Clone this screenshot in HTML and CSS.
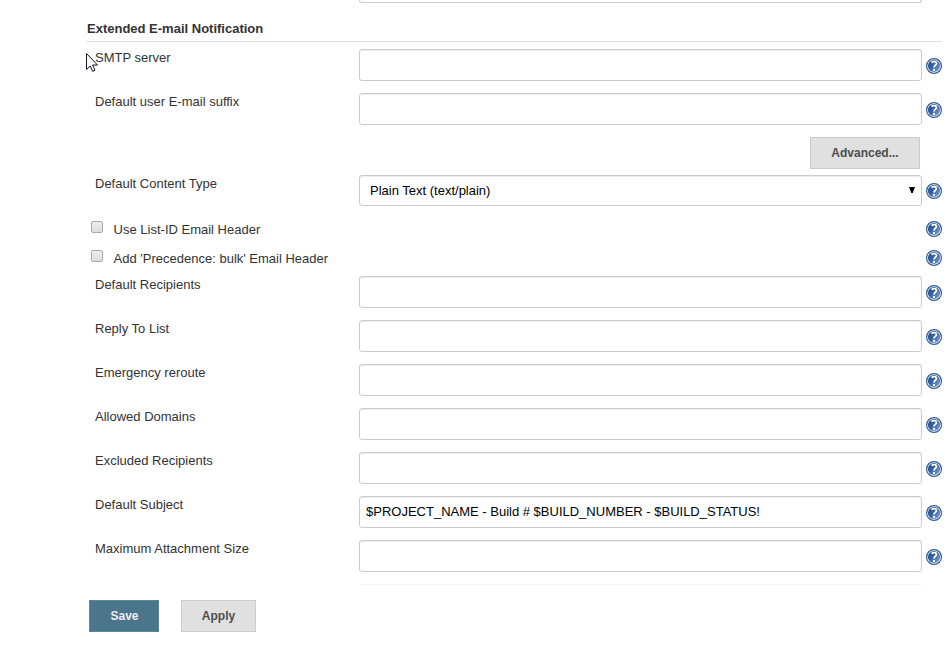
FILE: index.html
```html
<!DOCTYPE html>
<html lang="en">
<head>
<meta charset="utf-8">
<title>Configure System</title>
<link rel="stylesheet" href="styles.css">
</head>
<body>
<svg class="defs" aria-hidden="true">
  <defs>
    <linearGradient id="ball" x1="0" y1="0" x2="1" y2="1">
      <stop offset="0" stop-color="#204a87"/>
      <stop offset=".45" stop-color="#35619f"/>
      <stop offset="1" stop-color="#88abd8"/>
    </linearGradient>
    <symbol id="help" viewBox="0 0 16 16">
      <circle cx="8" cy="8" r="7.4" fill="#fff" stroke="#315c98" stroke-width="1.2"/>
      <circle cx="8" cy="8" r="6.1" fill="url(#ball)"/>
      <path d="M5.5 4.6C6.3 3.9 7.2 3.6 8.2 3.6C9.7 3.6 10.5 4.4 10.5 5.6C10.5 7.4 8 7.3 8 9.6" fill="none" stroke="#fff" stroke-width="1.8"/>
      <rect x="7" y="10.9" width="2" height="2" fill="#fff"/>
    </symbol>
  </defs>
</svg>
<main class="config">
  <div class="previous"></div>
  <h2 class="section-title">Extended E-mail Notification</h2>
  <form class="form">
    <div class="row"><label class="label">SMTP server</label><input class="field" type="text"><svg class="help"><use href="#help"/></svg></div>
    <div class="row"><label class="label">Default user E-mail suffix</label><input class="field" type="text"><svg class="help"><use href="#help"/></svg></div>
    <div class="advanced"><button class="button" type="button">Advanced...</button></div>
    <div class="row row-select"><label class="label">Default Content Type</label><div class="field select"><span>Plain Text (text/plain)</span><svg class="arrow" viewBox="0 0 6 6"><path d="M0 0H6L3.7 6H2.3Z"/></svg></div><svg class="help"><use href="#help"/></svg></div>
    <div class="check"><span class="box"></span><label class="check-label">Use List-ID Email Header</label><svg class="help"><use href="#help"/></svg></div>
    <div class="check"><span class="box"></span><label class="check-label">Add 'Precedence: bulk' Email Header</label><svg class="help"><use href="#help"/></svg></div>
    <div class="row"><label class="label">Default Recipients</label><input class="field" type="text"><svg class="help"><use href="#help"/></svg></div>
    <div class="row"><label class="label">Reply To List</label><input class="field" type="text"><svg class="help"><use href="#help"/></svg></div>
    <div class="row"><label class="label">Emergency reroute</label><input class="field" type="text"><svg class="help"><use href="#help"/></svg></div>
    <div class="row"><label class="label">Allowed Domains</label><input class="field" type="text"><svg class="help"><use href="#help"/></svg></div>
    <div class="row"><label class="label">Excluded Recipients</label><input class="field" type="text"><svg class="help"><use href="#help"/></svg></div>
    <div class="row"><label class="label">Default Subject</label><input class="field" type="text" value="$PROJECT_NAME - Build # $BUILD_NUMBER - $BUILD_STATUS!"><svg class="help"><use href="#help"/></svg></div>
    <div class="row"><label class="label">Maximum Attachment Size</label><input class="field" type="text"><svg class="help"><use href="#help"/></svg></div>
    <div class="next"></div>
    <div class="actions"><button class="button primary" type="button">Save</button><button class="button apply" type="button">Apply</button></div>
  </form>
</main>
<svg class="cursor" viewBox="0 0 12 19"><path d="M.5 .5V16.5L4.2 13L6.7 18.4L9 17.3L6.6 12H11.5Z" fill="#fff" stroke="#112" stroke-width="1"/></svg>
</body>
</html>
```
FILE: styles.css
```css
* { box-sizing: border-box; }

body {
  margin: 0;
  height: 645px;
  overflow: hidden;
  background: #fff;
  color: #333;
  font: 13px/17px "Liberation Sans", Arial, sans-serif;
}

.defs { position: absolute; width: 0; height: 0; }

.config { width: 855px; margin-left: 87px; }

.previous {
  width: 563px;
  height: 3px;
  margin-left: 272px;
  border: 1px solid #ccc;
  border-top: 0;
  border-radius: 0 0 3px 3px;
}

.section-title {
  height: 39px;
  margin: 0 0 7px;
  padding-top: 17px;
  border-bottom: 1px solid #ddd;
  font-size: 13px;
  line-height: 17px;
}

.row {
  display: grid;
  grid-template-columns: 272px 563px 16px;
  column-gap: 0;
  height: 44px;
  align-items: start;
}

.label { padding-left: 8px; }

.field {
  width: 563px;
  height: 32px;
  margin: 0;
  padding: 0 6px 2px;
  border: 1px solid #ccc;
  border-radius: 3px;
  background: #fff;
  box-shadow: inset 0 1px 1px rgba(0, 0, 0, .075);
  color: #000;
  font: 13px "Liberation Sans", Arial, sans-serif;
}

.help {
  display: block;
  width: 16px;
  height: 16px;
}

.row .help { margin: 9px 0 0 4px; }

.advanced {
  display: flex;
  justify-content: flex-end;
  height: 38px;
  padding-right: 22px;
}

.button {
  width: 110px;
  height: 32px;
  padding: 0;
  border: 1px solid #ccc;
  background: #e0e0e0;
  color: #4d4d4d;
  font: bold 12px "Liberation Sans", Arial, sans-serif;
}

.row-select { height: 46px; }

.row-select .help { margin-top: 8px; }

.select {
  display: flex;
  align-items: center;
  justify-content: space-between;
  height: 31px;
  padding: 0 6px 0 10px;
}

.arrow { width: 6px; height: 6px; margin-bottom: 2px; }

.check {
  display: flex;
  align-items: flex-start;
  height: 29px;
  padding-left: 4px;
}

.check + .row { margin-top: -3px; }

.box {
  width: 12px;
  height: 12px;
  border: 1px solid #aaa;
  border-radius: 2px;
  background: linear-gradient(#eee, #dcdcdc);
}

.check-label { flex: 1; padding-left: 10.6px; }

.next {
  width: 561px;
  height: 16px;
  margin-left: 273px;
  border-top: 1px solid #f3f3f3;
}

.actions {
  display: flex;
  gap: 22px;
  padding-left: 2px;
}

.primary {
  width: 70px;
  padding-left: 1px;
  border-color: #5289a0;
  background: #4b758b;
  color: #eee;
}

.apply { width: 75px; }

.cursor {
  position: absolute;
  left: 86px;
  top: 53px;
  width: 12px;
  height: 19px;
}
```
